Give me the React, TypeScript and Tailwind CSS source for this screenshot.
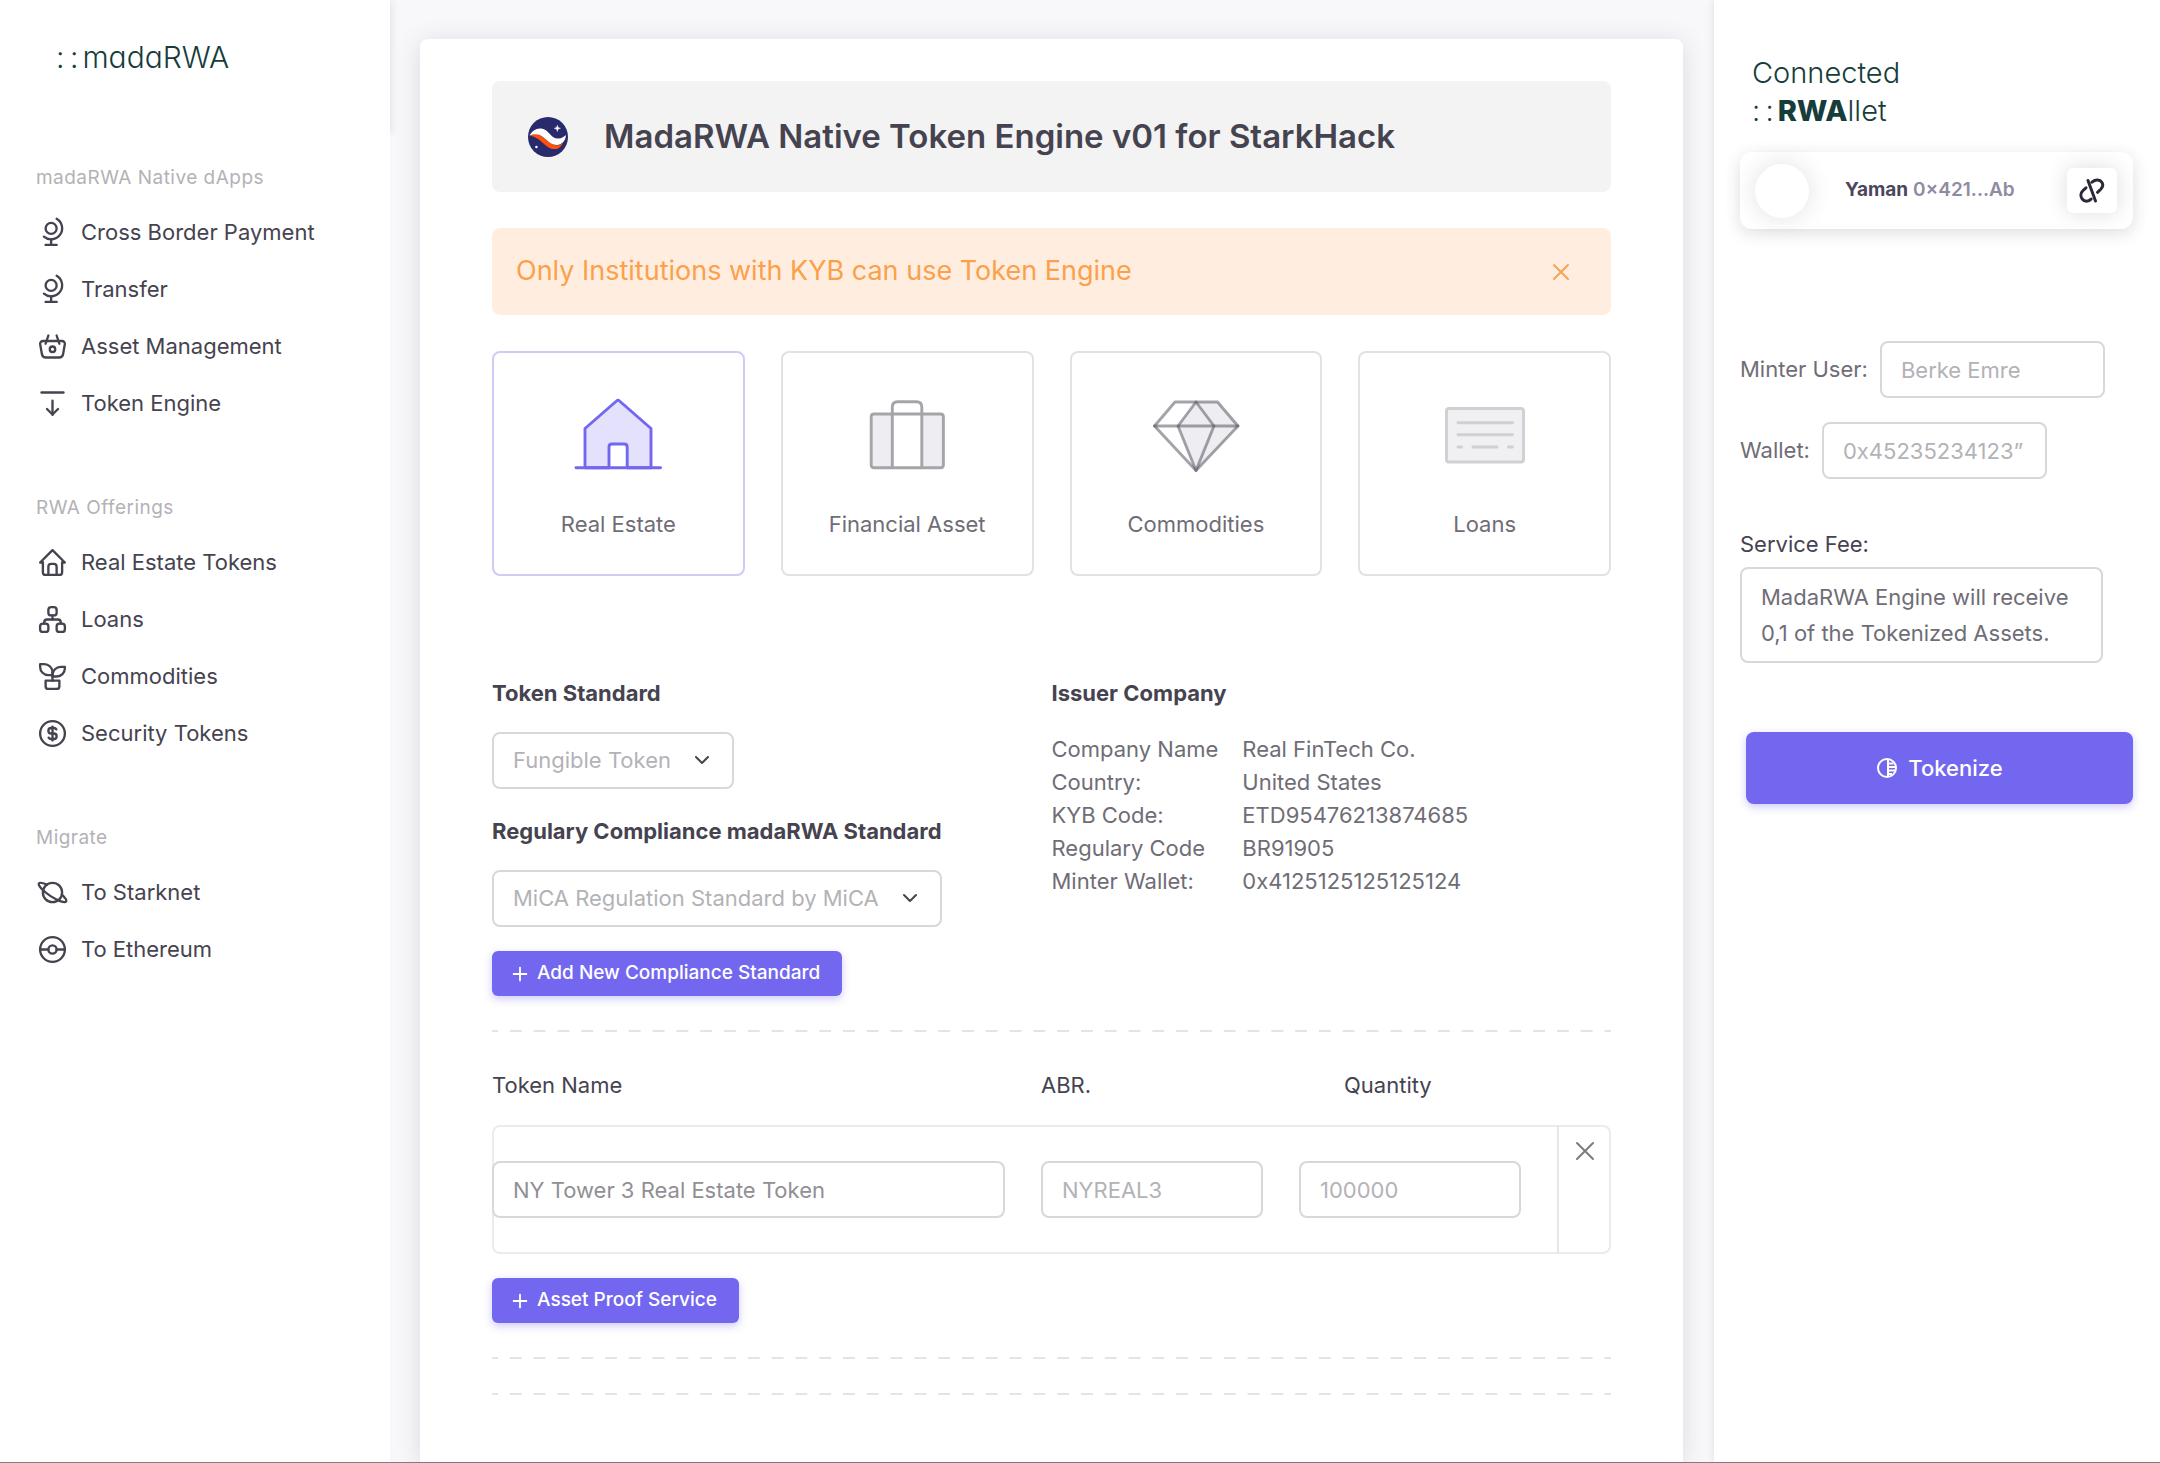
import React, { useState } from 'react';
import {
  TbArrowBarDown,
  TbBasket,
  TbChevronDown,
  TbCoin,
  TbGlobe,
  TbHome,
  TbPlanet,
  TbPlant,
  TbPlus,
  TbPokeball,
  TbSitemap,
  TbX,
} from 'react-icons/tb';
import type { IconType } from 'react-icons';

interface NavSection {
  title: string;
  items: { label: string; icon: IconType }[];
}

const sections: NavSection[] = [
  {
    title: 'madaRWA Native dApps',
    items: [
      { label: 'Cross Border Payment', icon: TbGlobe },
      { label: 'Transfer', icon: TbGlobe },
      { label: 'Asset Management', icon: TbBasket },
      { label: 'Token Engine', icon: TbArrowBarDown },
    ],
  },
  {
    title: 'RWA Offerings',
    items: [
      { label: 'Real Estate Tokens', icon: TbHome },
      { label: 'Loans', icon: TbSitemap },
      { label: 'Commodities', icon: TbPlant },
      { label: 'Security Tokens', icon: TbCoin },
    ],
  },
  {
    title: 'Migrate',
    items: [
      { label: 'To Starknet', icon: TbPlanet },
      { label: 'To Ethereum', icon: TbPokeball },
    ],
  },
];

const company = [
  ['Company Name', 'Real FinTech Co.'],
  ['Country:', 'United States'],
  ['KYB Code:', 'ETD95476213874685'],
  ['Regulary Code', 'BR91905'],
  ['Minter Wallet:', '0x4125125125125124'],
];

const fieldClass =
  'h-[57px] rounded-lg border-2 border-[#d8d7dc] bg-white px-[19px] text-[22px] outline-none focus:border-[#7367f0]';

const brandClass = "leading-[38px] font-light text-[#163c3c] [font-feature-settings:'cv11']";

const StarknetLogo = () => (
  <svg className="size-10 shrink-0" viewBox="0 0 39 39" aria-hidden="true">
    <circle cx="19.5" cy="19.5" r="19.5" fill="#29296e" />
    <path d="M2 18C4 16.5 7 15.5 10 17C17 20 20 26 27 27.500C30 27.600 32 27 34 25C32 30 28.500 31.500 25 31.300C18 31 14 23 7 20C5 18.800 3.500 18.500 2 18Z" fill="#ff4f0a" />
    <path d="M1.500 18C4 13.500 8 10.500 13 11.200C21 12.500 22 21.500 30 21C33 20.800 35 19 37 17.500C37 22 33.500 27.300 28 27.200C19 27 16 17 8 16.800C5.500 16.800 3.500 17.300 1.500 18Z" fill="#fff" />
    <path d="M28.600 8l.8 2.200 2.300.8-2.300.8-.8 2.300-.8-2.300-2.300-.8 2.300-.8z" fill="#fff" stroke="#fff" strokeWidth="0.4" />
    <circle cx="8.2" cy="29.300" r="1.200" fill="#fff" />
  </svg>
);

const HouseArt = () => (
  <svg className="h-[76px] w-[88px]" viewBox="0 0 88 76" fill="none" stroke="#7367f0" strokeWidth="2.900" strokeLinecap="round" strokeLinejoin="round" aria-hidden="true">
    <path d="M11 70.700V31.500L42.500 4Q44 2.600 45.500 4L77 31.500V70.700H53.200V50Q53.200 47 50.200 47H38Q35 47 35 50V70.700Z" fill="#e3e1fc" />
    <path d="M2 70.700H86.500" />
  </svg>
);

const CaseArt = () => (
  <svg className="h-[76px] w-[88px]" viewBox="0 0 88 76" fill="none" stroke="#a5a4a9" strokeWidth="2.900" strokeLinejoin="round" aria-hidden="true">
    <path d="M29.300 17V70.700H11Q8.200 70.700 8.200 68V20Q8.200 17 11 17ZM58.800 17V70.700H77.500Q80.400 70.700 80.400 68V20Q80.400 17 77.500 17Z" fill="#eeedf1" />
    <path d="M29.300 17H58.800M29.300 70.700H58.800M29.300 17V10Q29.300 4.700 34.600 4.700H53.500Q58.800 4.700 58.800 10V17" />
  </svg>
);

const DiamondArt = () => (
  <svg className="h-[76px] w-[88px]" viewBox="0 0 88 76" fill="none" strokeWidth="2.900" strokeLinecap="round" strokeLinejoin="round" aria-hidden="true">
    <path d="M44 5H65.500L86 29L44 73.500L26 29Z" fill="#eeedf1" />
    <g stroke="#4b4853">
      <path d="M23 5H65.500L86 29L44 73.500L2.500 29Z" strokeOpacity="0.5" />
      <path d="M44 5L62 29L44 73.500L26 29Z" strokeOpacity="0.5" />
      <path d="M2.500 29H86" strokeOpacity="0.5" />
    </g>
  </svg>
);

const LoanArt = () => (
  <svg className="h-[76px] w-[88px]" viewBox="0 0 88 76" fill="none" stroke="#d0cfd3" strokeWidth="2.900" strokeLinecap="round" aria-hidden="true">
    <rect x="5.500" y="11.500" width="77" height="53.500" rx="2.500" fill="#f0eff2" />
    <path d="M17 25.700H71.500M17 37.700H71.500M17 50H20.500M32 50H56M67.500 50H71.500" />
  </svg>
);

const assetTypes = [
  { label: 'Real Estate', art: HouseArt },
  { label: 'Financial Asset', art: CaseArt },
  { label: 'Commodities', art: DiamondArt },
  { label: 'Loans', art: LoanArt },
];

const DashedDivider = () => (
  <div className="h-[2px] bg-[linear-gradient(90deg,#e4e3e7_25%,transparent_25%_75%,#e4e3e7_75%)] bg-[length:24px_2px] bg-repeat-round" />
);

const Select: React.FC<{ id: string; option: string }> = ({ id, option }) => (
  <div className="relative w-fit">
    <select id={id} className="h-[57px] appearance-none rounded-lg border-2 border-[#d8d7dc] bg-white pl-[19px] pr-[61px] text-[22px] text-[#b3b2b7] outline-none">
      <option>{option}</option>
    </select>
    <TbChevronDown className="pointer-events-none absolute right-5 top-4 size-6" aria-hidden="true" />
  </div>
);

const PrimaryButton: React.FC<{ children: React.ReactNode }> = ({ children }) => (
  <button type="button" className="flex h-[45px] w-fit items-center gap-[6px] rounded-md bg-[#7367f0] pl-[17px] pr-[22px] text-[19px] font-medium text-white shadow-[0_3px_8px_rgba(115,103,240,0.35)]">
    <TbPlus className="size-[22px]" aria-hidden="true" />
    {children}
  </button>
);

const Sidebar = () => (
  <aside className="w-[390px] shrink-0 bg-white">
    <div className="h-[135px] pl-14 pt-[38px] shadow-[2px_0_8px_rgba(75,70,92,0.1)] [clip-path:inset(0_-12px_0_0)]">
      <a href="#" className={`flex gap-1 text-[30px] ${brandClass}`}>
        <span>:&thinsp;:</span>
        <span>madaRWA</span>
      </a>
    </div>
    <nav className="px-9 pt-7">
      {sections.map((section) => (
        <div key={section.title} className="mb-[61px]">
          <h2 className="mb-[11px] text-[19px] leading-[30px] tracking-wide text-[#b3b2b7]">{section.title}</h2>
          {section.items.map(({ label, icon: Icon }) => (
            <a key={label} href="#" className="flex h-[57px] items-center gap-3">
              <Icon className="size-[33px] shrink-0 [stroke-width:1.7]" aria-hidden="true" />
              {label}
            </a>
          ))}
        </div>
      ))}
    </nav>
  </aside>
);

const TokenEngine = () => {
  const [selected, setSelected] = useState('Real Estate');

  return (
    <main className="min-w-0 flex-1 pl-[30px] pr-[31px] pt-[39px]">
      <div className="h-full rounded-t-lg bg-white px-[72px] pt-[42px] shadow-[0_3px_24px_rgba(75,70,92,0.16)]">
        <header className="flex h-[111px] items-center gap-9 rounded-lg bg-[#f3f3f3] px-9">
          <StarknetLogo />
          <h1 className="text-[33px] font-semibold">MadaRWA Native Token Engine v01 for StarkHack</h1>
        </header>

        <div role="alert" className="mt-9 flex h-[87px] items-center justify-between rounded-lg bg-[#ffeedf] pl-6 pr-9 text-[27px] text-[#fba04b]">
          Only Institutions with KYB can use Token Engine
          <button type="button" aria-label="Dismiss">
            <TbX className="size-7 [stroke-width:1.6]" />
          </button>
        </div>

        <div className="mt-9 grid grid-cols-4 gap-9">
          {assetTypes.map(({ label, art: Art }) => (
            <button
              key={label}
              type="button"
              aria-pressed={selected === label}
              onClick={() => setSelected(label)}
              className={`flex h-[225px] flex-col items-center rounded-lg border-2 pt-11 text-[#6f6d76] ${
                selected === label ? 'border-[#d0cbf5]' : 'border-[#e2e2e5]'
              }`}
            >
              <Art />
              <span className="mt-[33px] leading-9">{label}</span>
            </button>
          ))}
        </div>

        <div className="mt-[99px] grid grid-cols-2">
          <div>
            <label htmlFor="standard" className="mb-[21px] block leading-9 font-bold">Token Standard</label>
            <Select id="standard" option="Fungible Token" />
            <label htmlFor="compliance" className="mb-[21px] mt-6 block leading-9 font-bold">
              Regulary Compliance madaRWA Standard
            </label>
            <Select id="compliance" option="MiCA Regulation Standard by MiCA" />
            <div className="mt-6">
              <PrimaryButton>Add New Compliance Standard</PrimaryButton>
            </div>
          </div>
          <div>
            <h2 className="mb-[22px] leading-9 font-bold">Issuer Company</h2>
            <table className="text-left leading-[33px] text-[#6f6d76]">
              <tbody>
                {company.map(([name, value]) => (
                  <tr key={name}>
                    <th className="pr-6 font-normal">{name}</th>
                    <td>{value}</td>
                  </tr>
                ))}
              </tbody>
            </table>
          </div>
        </div>

        <div className="mb-[35px] mt-[34px]">
          <DashedDivider />
        </div>

        <div className="grid grid-cols-[513fr_222fr_222fr] gap-9 pr-[90px] leading-9">
          <label htmlFor="token-name">Token Name</label>
          <label htmlFor="abr">ABR.</label>
          <label htmlFor="quantity" className="pl-[45px]">Quantity</label>
        </div>
        <div className="mt-[22px] flex h-[129px] rounded-lg shadow-[inset_0_0_0_2px_#ebebed]">
          <div className="grid flex-1 grid-cols-[513fr_222fr_222fr] items-center gap-9 pr-9">
            <input id="token-name" placeholder="NY Tower 3 Real Estate Token" className={`${fieldClass} min-w-0 placeholder:text-[#918f95]`} />
            <input id="abr" placeholder="NYREAL3" className={`${fieldClass} min-w-0 placeholder:text-[#b3b2b7]`} />
            <input id="quantity" placeholder="100000" className={`${fieldClass} min-w-0 placeholder:text-[#b3b2b7]`} />
          </div>
          <div className="w-[54px] border-l-2 border-[#e6e6e9] pt-[10px] text-center">
            <button type="button" aria-label="Remove token" className="text-[#7b7981]">
              <TbX className="size-8 [stroke-width:1.5]" />
            </button>
          </div>
        </div>
        <div className="mt-6">
          <PrimaryButton>Asset Proof Service</PrimaryButton>
        </div>

        <div className="mt-[34px] space-y-[34px]">
          <DashedDivider />
          <DashedDivider />
        </div>
      </div>
    </main>
  );
};

const WalletPanel = () => (
  <aside className="w-[446px] shrink-0 bg-white pl-[26px] pr-[27px] pt-[54px] shadow-[0_0_8px_rgba(75,70,92,0.14)]">
    <h2 className={`pl-3 text-[29px] ${brandClass}`}>
      Connected
      <span className="flex gap-1">
        <span>:&thinsp;:</span>
        <span>
          <b className="font-extrabold">RWA</b>llet
        </span>
      </span>
    </h2>

    <div className="mt-[22px] flex h-[77px] items-center rounded-xl pl-[15px] pr-4 shadow-[0_4px_16px_rgba(47,43,61,0.16)]">
      <div className="size-[54px] rounded-full bg-white shadow-[0_0_24px_rgba(47,43,61,0.14)]" />
      <p className="ml-9 text-[19px] font-semibold text-[#8f8ba0]">
        <b className="font-bold text-[#4b465c]">Yaman</b> 0×421...Ab
      </p>
      <button type="button" aria-label="Disconnect wallet" className="ml-auto flex h-[45px] w-[50px] items-center justify-center rounded-md bg-white text-[#2b2838] shadow-[0_0_20px_rgba(47,43,61,0.16)]">
        <svg className="size-7" viewBox="0 0 28 28" fill="none" stroke="currentColor" strokeWidth="3" strokeLinecap="round" aria-hidden="true">
          <path d="M10 3.500L17.500 24M14 5.200C17.500 2.200 22 2.500 24 5.500C25.500 8 24.500 10.500 22.500 12.500L19.500 15.300" />
          <path d="M8 10.800L5 13.500C2.500 16 2.200 19.500 4.200 22C6.500 25 10.500 25 13.200 22" />
        </svg>
      </button>
    </div>

    <div className="mt-28 flex items-center gap-3">
      <label htmlFor="minter" className="text-[#6f6d76]">Minter User:</label>
      <input id="minter" placeholder="Berke Emre" className={`${fieldClass} w-[225px] placeholder:text-[#b3b2b7]`} />
    </div>
    <div className="mt-6 flex items-center gap-3">
      <label htmlFor="wallet" className="text-[#6f6d76]">Wallet:</label>
      <input id="wallet" placeholder="0x45235234123”" className={`${fieldClass} w-[225px] placeholder:text-[#b3b2b7]`} />
    </div>

    <label htmlFor="fee" className="mb-[5px] mt-[47px] block leading-9">Service Fee:</label>
    <textarea
      id="fee"
      defaultValue="MadaRWA Engine will receive 0,1 of the Tokenized Assets."
      className="block h-24 w-[363px] resize-none overflow-hidden rounded-lg border-2 border-[#d8d7dc] px-[19px] py-[10px] leading-9 text-[#6f6d76] outline-none"
    />

    <div className="mt-[69px] pl-[6px]">
      <button type="button" className="flex h-[72px] w-full items-center justify-center gap-[10px] rounded-lg bg-[#7367f0] font-medium text-white shadow-[0_3px_8px_rgba(115,103,240,0.35)]">
        <svg className="size-[22px]" viewBox="0 0 22 22" fill="none" stroke="currentColor" strokeWidth="2" aria-hidden="true">
          <circle cx="11" cy="11" r="9" />
          <path d="M12 2V20M12 6.500H17.500M12 10H19.500M12 13.500H19M12 17H16" />
        </svg>
        Tokenize
      </button>
    </div>
  </aside>
);

const App = () => (
  <div className="flex min-h-screen border-b border-[#808080] bg-[#f8f7fa] font-['Inter',sans-serif] text-[22px] text-[#464350]">
    <Sidebar />
    <TokenEngine />
    <WalletPanel />
  </div>
);

export default App;
